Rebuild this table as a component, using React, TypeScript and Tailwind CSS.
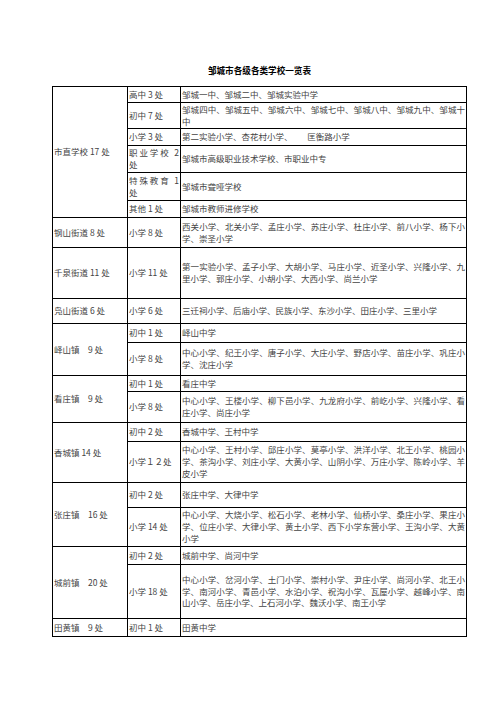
import React from 'react';

type Item = { t: string[]; l: string[] };
type Group = { name: string; span: string; items: Item[] };

const groups: Group[] = [
  {
    name: '市直学校 17 处',
    span: 'row-span-6',
    items: [
      { t: ['高中 3 处'], l: ['邹城一中、邹城二中、邹城实验中学'] },
      { t: ['初中 7 处'], l: ['邹城四中、邹城五中、邹城六中、邹城七中、邹城八中、邹城九中、邹城十', '中'] },
      { t: ['小学 3 处'], l: ['第二实验小学、杏花村小学、\u3000\u3000 匡衡路小学'] },
      { t: ['职业学校 2', '处'], l: ['邹城市高级职业技术学校、市职业中专'] },
      { t: ['特殊教育 1', '处'], l: ['邹城市聋哑学校'] },
      { t: ['其他 1 处'], l: ['邹城市教师进修学校'] },
    ],
  },
  {
    name: '钢山街道 8 处',
    span: 'row-span-1',
    items: [
      { t: ['小学 8 处'], l: ['西关小学、北关小学、孟庄小学、苏庄小学、杜庄小学、前八小学、杨下小', '学、崇圣小学'] },
    ],
  },
  {
    name: '千泉街道 11 处',
    span: 'row-span-1',
    items: [
      { t: ['小学 11 处'], l: ['第一实验小学、孟子小学、大胡小学、马庄小学、近圣小学、兴隆小学、九', '里小学、郭庄小学、小胡小学、大西小学、尚兰小学'] },
    ],
  },
  {
    name: '凫山街道 6 处',
    span: 'row-span-1',
    items: [{ t: ['小学 6 处'], l: ['三迁祠小学、后庙小学、民族小学、东沙小学、田庄小学、三里小学'] }],
  },
  {
    name: '峄山镇\u30009 处',
    span: 'row-span-2',
    items: [
      { t: ['初中 1 处'], l: ['峄山中学'] },
      { t: ['小学 8 处'], l: ['中心小学、纪王小学、唐子小学、大庄小学、野店小学、苗庄小学、巩庄小', '学、沈庄小学'] },
    ],
  },
  {
    name: '看庄镇\u30009 处',
    span: 'row-span-2',
    items: [
      { t: ['初中 1 处'], l: ['看庄中学'] },
      { t: ['小学 8 处'], l: ['中心小学、王楼小学、柳下邑小学、九龙府小学、前屹小学、兴隆小学、看', '庄小学、尚庄小学'] },
    ],
  },
  {
    name: '香城镇 14 处',
    span: 'row-span-2',
    items: [
      { t: ['初中 2 处'], l: ['香城中学、王村中学'] },
      {
        t: ['小学１２处'],
        l: [
          '中心小学、王村小学、邱庄小学、莫亭小学、洪洋小学、北王小学、桃园小',
          '学、茶沟小学、刘庄小学、大黄小学、山阴小学、万庄小学、陈岭小学、羊',
          '皮小学',
        ],
      },
    ],
  },
  {
    name: '张庄镇\u300016 处',
    span: 'row-span-2',
    items: [
      { t: ['初中 2 处'], l: ['张庄中学、大律中学'] },
      {
        t: ['小学 14 处'],
        l: [
          '中心小学、大烧小学、松石小学、老林小学、仙桥小学、桑庄小学、果庄小',
          '学、位庄小学、大律小学、黄土小学、西下小学东营小学、王沟小学、大黄',
          '小学',
        ],
      },
    ],
  },
  {
    name: '城前镇\u300020 处',
    span: 'row-span-2',
    items: [
      { t: ['初中 2 处'], l: ['城前中学、尚河中学'] },
      {
        t: ['小学 18 处'],
        l: [
          '中心小学、岔河小学、土门小学、崇村小学、尹庄小学、尚河小学、北王小',
          '学、南河小学、青邑小学、水泊小学、祝沟小学、瓦屋小学、越峰小学、南',
          '山小学、岳庄小学、上石河小学、魏沃小学、南王小学',
        ],
      },
    ],
  },
  {
    name: '田黄镇\u30009 处',
    span: 'row-span-1',
    items: [{ t: ['初中 1 处'], l: ['田黄中学'] }],
  },
];

function Lines({ lines }: { lines: string[] }) {
  return (
    <div className="w-full">
      {lines.map((ln, i) => (
        <div key={i} className={i < lines.length - 1 ? 'text-justify [text-align-last:justify]' : ''}>
          {ln}
        </div>
      ))}
    </div>
  );
}

export default function App() {
  const cells: React.ReactNode[] = [];
  groups.forEach((g, gi) => {
    cells.push(
      <div
        key={`g${gi}`}
        className={`${g.span} col-start-1 flex items-center border-r border-b border-black pl-px`}
      >
        {g.name}
      </div>
    );
    g.items.forEach((it, ii) => {
      cells.push(
        <div key={`t${gi}-${ii}`} className="col-start-2 flex items-center border-r border-b border-black pl-px pr-px">
          <Lines lines={it.t} />
        </div>
      );
      cells.push(
        <div key={`l${gi}-${ii}`} className="col-start-3 flex items-center border-r border-b border-black pl-px pr-px">
          <Lines lines={it.l} />
        </div>
      );
    });
  });

  return (
    <div
      className="w-[496px] h-[702px] bg-white text-[#444] overflow-hidden"
      style={{ fontFamily: '"Noto Sans CJK SC", "Noto Sans", sans-serif' }}
    >
      <div className="pt-[64px] w-[415px] ml-[52px]">
        <div className="text-center text-[8.6px] leading-[12px] font-bold text-black">邹城市各级各类学校一览表</div>
        <div className="mt-[10px] grid grid-cols-[75px_53px_286px] grid-rows-[16px_26px_17px_27px_28px_17px_30px_51px_25px_19px_33px_16px_31px_19px_41px_25px_39px_18px_54px_18px] border-l border-t border-black text-[8.5px] leading-[11.8px]">
          {cells}
        </div>
      </div>
    </div>
  );
}
